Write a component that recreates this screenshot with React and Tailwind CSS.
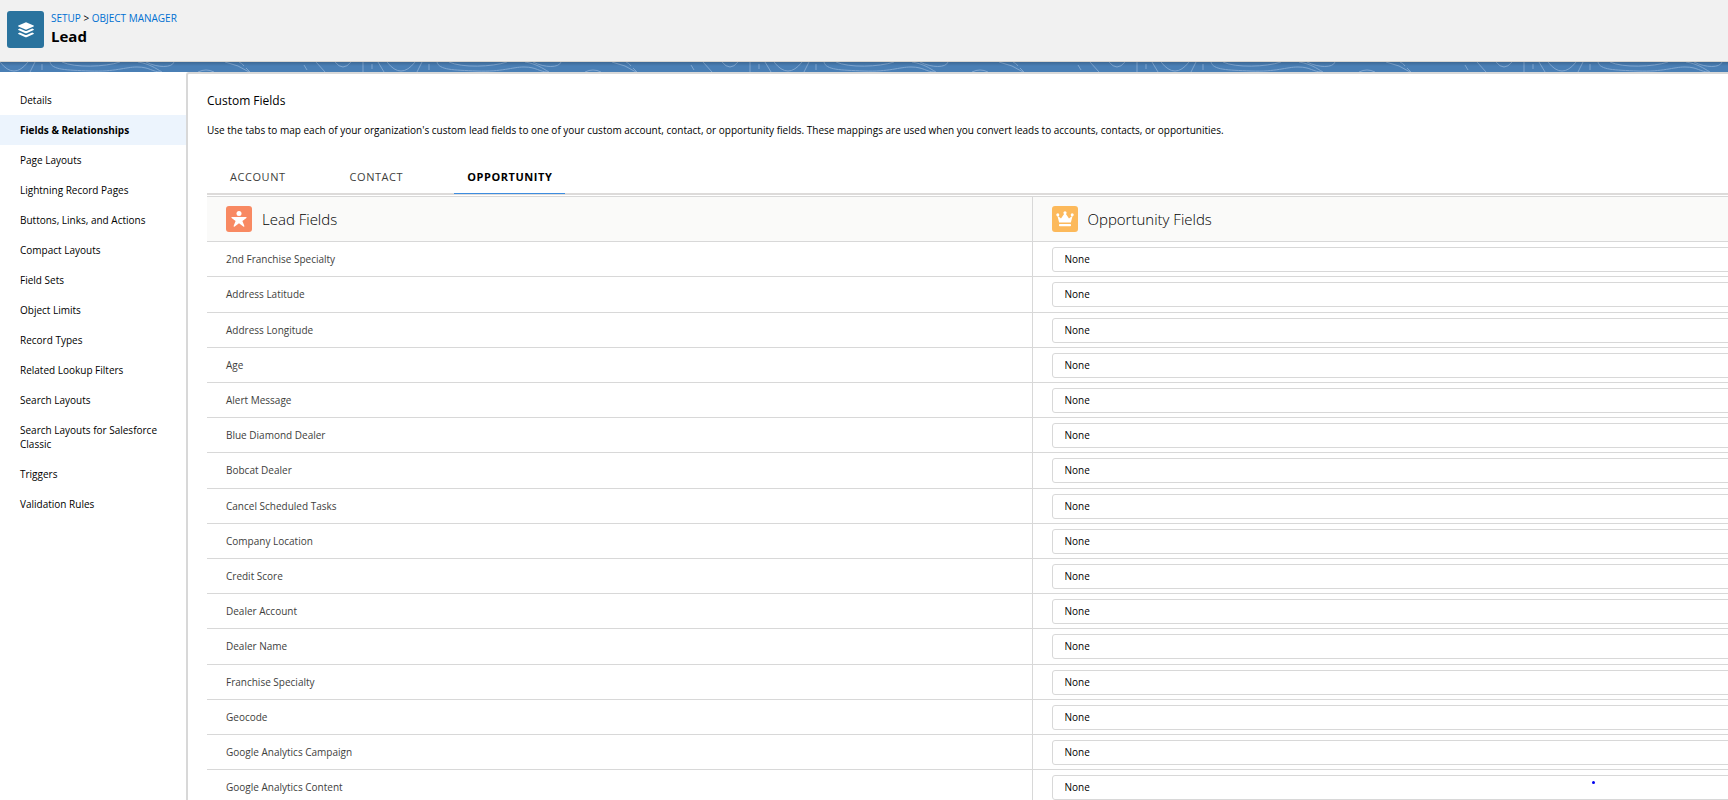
const sidebarItems = [
  'Details',
  'Fields & Relationships',
  'Page Layouts',
  'Lightning Record Pages',
  'Buttons, Links, and Actions',
  'Compact Layouts',
  'Field Sets',
  'Object Limits',
  'Record Types',
  'Related Lookup Filters',
  'Search Layouts',
  'Search Layouts for Salesforce Classic',
  'Triggers',
  'Validation Rules',
];

const tabs = ['Account', 'Contact', 'Opportunity'];

const leadFields = [
  '2nd Franchise Specialty',
  'Address Latitude',
  'Address Longitude',
  'Age',
  'Alert Message',
  'Blue Diamond Dealer',
  'Bobcat Dealer',
  'Cancel Scheduled Tasks',
  'Company Location',
  'Credit Score',
  'Dealer Account',
  'Dealer Name',
  'Franchise Specialty',
  'Geocode',
  'Google Analytics Campaign',
  'Google Analytics Content',
];

function LayersIcon() {
  return (
    <svg className="w-4 h-4" viewBox="0 0 16 16" fill="#fff">
      <path d="M7.4 .4 .4 3.6q-.6.4 0 .8l7 3.2q.6.2 1.2 0l7-3.2q.6-.4 0-.8L8.600.4Q8 .2 7.400.4Z" />
      <path d="M.3 7.200 1.800 6.500 7.400 9q.6.2 1.200 0l5.600-2.500 1.500.7q.5.400 0 .8l-7.100 3.200q-.6.200-1.200 0L.3 8q-.500-.400 0-.8Z" />
      <path d="M.3 11.200 1.800 10.500 7.400 13q.6.2 1.200 0l5.600-2.500 1.500.7q.5.400 0 .8l-7.100 3.200q-.6.200-1.200 0L.3 12q-.500-.400 0-.8Z" />
    </svg>
  );
}

function LeadIcon() {
  return (
    <svg className="w-[26px] h-[26px] rounded-[3px] bg-[#f88962]" viewBox="0 0 26 26" fill="#fff">
      <circle cx="13" cy="7.500" r="2.500" />
      <path d="M5.800 11h14.400q.8.500.2 1l-4 2.900 2 5.200q.1.900-.8.600L13 17.200l-4.600 3.500q-.9.300-.8-.6l2-5.200-4-2.900q-.6-.5.200-1Z" />
    </svg>
  );
}

function OpportunityIcon() {
  return (
    <svg className="w-[26px] h-[26px] rounded-[3px] bg-[#fcb95b]" viewBox="0 0 26 26" fill="#fff">
      <circle cx="5.800" cy="8.800" r="1.500" />
      <circle cx="13" cy="6.800" r="1.600" />
      <circle cx="20.200" cy="8.800" r="1.500" />
      <path d="M5.300 9.500 9 12.600 12.400 7.500h1.200L17 12.600l3.700-3.100-1.700 6.600q-.1.500-.6.500H7.600q-.5 0-.6-.5Z" />
      <rect x="7" y="18" width="12" height="2.300" rx=".8" />
    </svg>
  );
}

function ContourBand() {
  return (
    <div className="bg-[#4a7fb5]">
      <svg className="block w-full h-[10px]">
        <defs>
          <pattern id="contours" width="387" height="10" patternUnits="userSpaceOnUse">
            <g fill="none" stroke="#7fa6d0" strokeWidth="1">
              <path d="M0 0Q14 18 28 0M35 0 30 10M42 2v6" />
              <path d="M50 0C52 8 66 8 90 9 115 10 125 5 137 5 150 5 152 10 161 10" />
              <path d="M62 0C75 6 105 5 120 0M138 0C150 2 155 6 162 10M146 0C158 6 172 6 174 0" />
              <path d="M198 10q8-4 16 0M225 0q14 3 24 10M239 0q3 1 5 4M246 6l4 4" />
              <path d="M304 3l3 5M316 0 325 10M335 0q8 10 16 0M363 0v10M372 2v5M378 0l6 10" />
            </g>
          </pattern>
          <linearGradient id="bandShade" x1="0" y1="0" x2="0" y2="1">
            <stop offset="0" stopColor="#000" stopOpacity=".18" />
            <stop offset=".4" stopColor="#000" stopOpacity="0" />
          </linearGradient>
        </defs>
        <rect width="100%" height="10" fill="url(#contours)" />
        <rect width="100%" height="10" fill="url(#bandShade)" />
      </svg>
    </div>
  );
}

function Sidebar() {
  return (
    <nav className="w-[186px] shrink-0 pt-[13px]">
      <ul>
        {sidebarItems.map((item) => (
          <li key={item}>
            <a
              href="#"
              className={`block py-2 pl-5 pr-6 leading-[14px] ${
                item === 'Fields & Relationships' ? 'bg-[#ecf4fd] font-bold' : ''
              }`}
            >
              {item}
            </a>
          </li>
        ))}
      </ul>
    </nav>
  );
}

function Tabs() {
  return (
    <div role="tablist" className="flex gap-[38px] pl-2.5 border-b-2 border-[#dddbda] text-[11px] tracking-wider">
      {tabs.map((tab) => {
        const active = tab === 'Opportunity';
        return (
          <button
            key={tab}
            role="tab"
            aria-selected={active}
            className={`-mb-px h-[33px] px-[13px] uppercase border-b ${
              active ? 'border-[#3d8de0] font-bold text-black' : 'border-transparent text-[#3e3e3c]'
            }`}
          >
            {tab}
          </button>
        );
      })}
    </div>
  );
}

function MappingTable() {
  return (
    // the table runs on past the right edge of the window
    <div className="-mr-[129px]">
      <table className="mt-px w-full table-fixed border-collapse border-t border-[#d8d8d8]">
        <thead>
          <tr className="h-[45px] bg-[#fafaf9] border-b border-[#d8d8d8]">
            <th scope="col" className="pl-[19px] text-left font-light">
              <div className="flex items-center gap-2.5 text-[15px]">
                <LeadIcon />
                Lead Fields
              </div>
            </th>
            <th scope="col" className="pl-[19px] border-l border-[#d8d8d8] text-left font-light">
              <div className="flex items-center gap-2.5 text-[15px]">
                <OpportunityIcon />
                Opportunity Fields
              </div>
            </th>
          </tr>
        </thead>
        <tbody>
          {leadFields.map((field, i) => (
            <tr key={field} className="h-[35px] border-b border-[#d8d8d8] [&:nth-child(5n+2)]:h-9">
              <td className="pl-[19px] text-[#3e3e3c]">
                <label htmlFor={`map-${i}`}>{field}</label>
              </td>
              <td className="pl-[19px] border-l border-[#d8d8d8]">
                <select
                  id={`map-${i}`}
                  className="block w-full h-[25px] pl-3 appearance-none bg-white border border-[#d8d8d8] rounded-[3px]"
                >
                  <option>None</option>
                </select>
              </td>
            </tr>
          ))}
        </tbody>
      </table>
    </div>
  );
}

export default function App() {
  return (
    <div className="relative h-screen overflow-hidden flex flex-col bg-white text-[10px] text-black font-['Open_Sans','Noto_Sans',sans-serif]">
      <header className="flex items-start gap-[7px] h-[62px] shrink-0 pl-[7px] pt-[11px] bg-[#f1f1f1] border-b border-[#d8d5d0]">
        <div className="flex items-center justify-center w-[37px] h-[37px] rounded-[3px] bg-[#2a739e]">
          <LayersIcon />
        </div>
        <div>
          <div className="leading-[14px] uppercase">
            <a href="#" className="text-[#0070d2]">Setup</a>
            {' > '}
            <a href="#" className="text-[#0070d2]">Object Manager</a>
          </div>
          <h1 className="text-[15px] leading-[22px] font-bold">Lead</h1>
        </div>
      </header>
      <ContourBand />
      <div className="flex flex-1 min-h-0">
        <Sidebar />
        <main className="flex-1 min-w-0 pl-[19px] pt-[17px] border-l-2 border-t-2 border-[#d8d8d8] rounded-tl-[3px]">
          <h2 className="text-xs leading-5">Custom Fields</h2>
          <p className="mt-3 mb-6 leading-[14px]">
            Use the tabs to map each of your organization's custom lead fields to one of your custom account, contact, or
            opportunity fields. These mappings are used when you convert leads to accounts, contacts, or opportunities.
          </p>
          <Tabs />
          <MappingTable />
        </main>
      </div>
      <span className="absolute right-[133px] bottom-4 w-[3px] h-[3px] rounded-full bg-[#0000f0]" />
    </div>
  );
}
